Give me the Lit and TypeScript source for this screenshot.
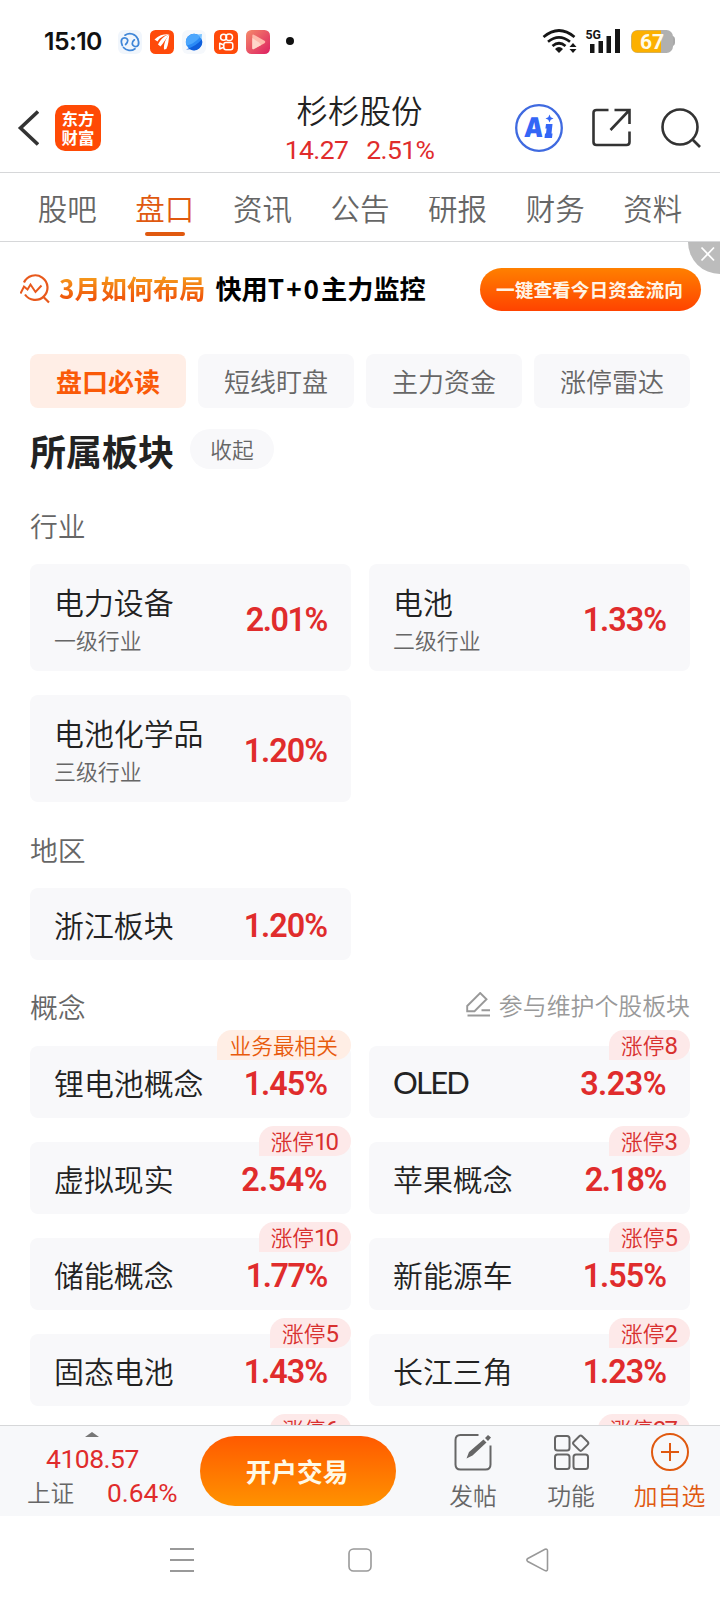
import { LitElement, html, svg, css, nothing } from "lit";
import { customElement, property } from "lit/decorators.js";
import { classMap } from "lit/directives/class-map.js";

interface Sector {
  name: string;
  level?: string;
  change: string;
  tag?: string;
  hot?: boolean;
}

const industries: Sector[] = [
  { name: "电力设备", level: "一级行业", change: "2.01%" },
  { name: "电池", level: "二级行业", change: "1.33%" },
  { name: "电池化学品", level: "三级行业", change: "1.20%" },
];
const regions: Sector[] = [{ name: "浙江板块", change: "1.20%" }];
const concepts: Sector[] = [
  { name: "锂电池概念", change: "1.45%", tag: "业务最相关", hot: true },
  { name: "OLED", change: "3.23%", tag: "涨停8" },
  { name: "虚拟现实", change: "2.54%", tag: "涨停10" },
  { name: "苹果概念", change: "2.18%", tag: "涨停3" },
  { name: "储能概念", change: "1.77%", tag: "涨停10" },
  { name: "新能源车", change: "1.55%", tag: "涨停5" },
  { name: "固态电池", change: "1.43%", tag: "涨停5" },
  { name: "长江三角", change: "1.23%", tag: "涨停2" },
  { name: "", change: "", tag: "涨停6" },
  { name: "", change: "", tag: "涨停37" },
];

@customElement("sector-card")
export class SectorCard extends LitElement {
  @property({ attribute: false }) item!: Sector;

  static styles = css`
    :host {
      display: block;
      position: relative;
      background: #f8f8fa;
      border-radius: 8px;
    }
    .row {
      display: flex;
      align-items: center;
      justify-content: space-between;
      height: 72px;
      padding: 0 24px;
    }
    .row.tall { height: 107px; }
    .name {
      font-size: 29.9px;
      line-height: 40px;
      color: #222;
      white-space: nowrap;
    }
    .name.latin { font-family: Lato, sans-serif; font-weight: 400; font-size: 31px; letter-spacing: -1.8px; }
    .text { display: flex; flex-direction: column; }
    .level { font-size: 21.9px; line-height: 30px; margin-top: 4px; color: #666; }
    .change {
      font-family: Roboto, sans-serif;
      font-weight: 600;
      font-size: 32.3px;
      line-height: 40px;
      color: #e02c2c;
      letter-spacing: -0.5px;
      padding-top: 4px;
    }
    .change.narrow { letter-spacing: -1px; }
    .change.tight { letter-spacing: -1.4px; }
    .tag {
      position: absolute;
      right: 0;
      top: -16px;
      height: 30px;
      line-height: 30px;
      padding: 0 14px 0 12px;
      border-radius: 15px 15px 15px 0;
      background: #fde9e9;
      color: #d8302f;
      font-size: 21.7px;
      display: flex;
    }
    .tag.hot { background: #ffeee5; color: #e85a0c; padding: 0 13px; }
    .num { font-family: Roboto, sans-serif; font-size: 24px; font-weight: 400; letter-spacing: -2px; padding-top: 1px; }
  `;

  render() {
    const { name, level, change, tag, hot } = this.item;
    const label = tag?.replace(/\d+$/, "");
    const count = tag?.slice(label!.length);
    const changeClass = {
      change: true,
      narrow: change.startsWith("1"),
      tight: change.slice(1).includes("1") || change.includes("77"),
    };
    return html`
      <div class=${classMap({ row: true, tall: !!level })}>
        <div class="text">
          <span class=${classMap({ name: true, latin: /^[A-Z]+$/.test(name) })}>${name}</span>
          ${level ? html`<span class="level">${level}</span>` : nothing}
        </div>
        <span class=${classMap(changeClass)}>${change}</span>
      </div>
      ${tag
        ? html`<div class=${classMap({ tag: true, hot: !!hot })}>
            <span>${label}</span>${count ? html`<span class="num">${count}</span>` : nothing}
          </div>`
        : nothing}
    `;
  }
}

const statusIcons = svg`
  <g>
    <rect x="0" y="0" width="24" height="24" rx="6" fill="#f1f6fc"/>
    <g fill="none" stroke="#3f86d8" stroke-width="1.700" stroke-linecap="round">
      <path d="M7 5.200A8.500 8.500 0 0 1 19.800 9M17 18.800A8.500 8.500 0 0 1 5.500 17.500"/>
      <path d="M4.300 15.500C1.800 9.500 4.500 7.500 7.500 8C10.500 8.800 10.500 12 7.600 14.500"/>
      <path d="M19.800 9C22.200 15 19.500 17 16.700 16.500C13.500 15.500 13.500 12 16.400 9.800"/>
    </g>
  </g>
  <g transform="translate(32 0)">
    <rect width="24" height="24" rx="5.500" fill="#ff4a0a"/>
    <path d="M4.500 9.500C9 5 14 4 19 4.300C13 6 9.500 8 7.500 11.500Z" fill="#fff"/>
    <path d="M8 14.500C11 9 14 6 19 4.600C16 9 14 12.500 10.500 16.500Z" fill="#fff"/>
    <path d="M14 19.500C13.500 14 16 8 19.300 4.600C18.600 10 18.500 15 16.300 19Z" fill="#fff"/>
  </g>
  <g transform="translate(64 0)">
    <rect width="24" height="24" rx="6" fill="#f5f8fc"/>
    <circle cx="12" cy="12" r="8.200" fill="#2a8af5"/>
    <path d="M15 4.500L20 4L19.500 9Z" fill="#7cc4ff"/>
    <path d="M3.900 13A8.200 8.200 0 0 1 18 6.500C15 11 10 14.500 4.500 15.500Z" fill="#4ba6fd"/>
    <path d="M19.800 9.500C16 14 11 17 4 19.500L8 19.200A8.200 8.200 0 0 0 19.800 9.500Z" fill="#0f5fdc"/>
  </g>
  <g transform="translate(96 0)">
    <rect width="24" height="24" rx="5.500" fill="#ff4a0a"/>
    <g fill="none" stroke="#fff" stroke-width="1.500" stroke-linejoin="round">
      <circle cx="9.600" cy="7.300" r="3"/><circle cx="15.200" cy="7.300" r="3.300"/>
      <rect x="9.800" y="12.600" width="9" height="7.200" rx="2.200"/>
      <path d="M9.700 15L5.700 13.200V19L9.700 17.300"/>
    </g>
  </g>
  <g transform="translate(128 0)">
    <rect width="24" height="24" rx="5.500" fill="url(#pinkGrad)"/>
    <path d="M6.300 5.600Q6.300 4 7.800 4.700L18.500 10.800Q20 12 18.500 13.200L7.800 19Q6.300 19.700 6.300 18Z" fill="#ffb9ab"/>
    <path d="M6.300 8L13 12.500L15 15L7.800 19Q6.300 19.700 6.300 18Z" fill="#ffd6ca"/>
  </g>
  <circle cx="172" cy="11" r="4" fill="#111"/>
`;

@customElement("app-root")
export class AppRoot extends LitElement {
  static styles = css`
    :host {
      display: flex;
      flex-direction: column;
      width: 720px;
      height: 1604px;
      overflow: hidden;
      background: #fff;
      font-family: "Noto Sans CJK SC", sans-serif;
      font-weight: 350;
      color: #222;
    }
    svg { display: block; flex: none; }
    .digits { font-family: Roboto, sans-serif; font-weight: 400; }
    .status {
      height: 72px;
      box-sizing: border-box;
      padding: 27px 45px 0 44px;
      display: flex;
      align-items: flex-start;
    }
    .time {
      width: 74px;
      font-family: Inter, sans-serif;
      font-size: 24.8px;
      line-height: 28px;
      font-weight: 600;
      letter-spacing: -0.6px;
      color: #111;
    }
    .apps { margin-top: 3px; }
    .sys { margin: 0 0 0 auto; }
    .header {
      height: 100px;
      border-bottom: 1px solid #d6d7d9;
      display: grid;
      grid-template-columns: 1fr auto 1fr;
      align-items: center;
    }
    .left { display: flex; align-items: center; gap: 16px; padding: 11px 0 0 17px; }
    .brand {
      width: 46px;
      height: 46px;
      border-radius: 10px;
      background: #ff4a05;
      color: #fff;
      font-size: 16.4px;
      line-height: 18.500px;
      font-weight: 700;
      display: flex;
      flex-direction: column;
      align-items: center;
      justify-content: center;
    }
    .stock { text-align: center; padding-top: 12px; margin-left: -1px; }
    .stock-name { font-size: 31.5px; line-height: 40px; }
    .quote { display: flex; gap: 18px; justify-content: center; font-size: 26.500px; line-height: 34px; margin-top: 4px; letter-spacing: -0.6px; color: #e02c2c; }
    .actions { display: flex; align-items: center; justify-content: flex-end; padding: 11px 19px 0 0; }
    .ai { margin-right: 29px; }
    .share { margin-right: 30px; }
    .tabs {
      height: 68px;
      border-bottom: 1px solid #d6d7d9;
      display: grid;
      grid-template-columns: repeat(7, 97.600px);
      justify-content: center;
    }
    .tab {
      display: flex;
      flex-direction: column;
      align-items: center;
      font-size: 29.500px;
      line-height: 40px;
      padding-top: 14px;
      color: #666;
    }
    .tab.on { color: #e0590f; }
    .bar { width: 40px; height: 4px; border-radius: 2px; background: #e0590f; margin-top: 5px; }
    .banner {
      position: relative;
      height: 84px;
      box-sizing: border-box;
      padding: 10px 19px 0 20px;
      display: flex;
      align-items: center;
      font-size: 26.200px;
      line-height: 36px;
      font-weight: 700;
      white-space: nowrap;
    }
    .lead {
      margin: -2px 10px 0 8px;
      background: linear-gradient(#f59a1c 20%, #f0550a 80%);
      -webkit-background-clip: text;
      background-clip: text;
      color: transparent;
    }
    .pitch { color: #000; margin-top: -2px; }
    .wide { letter-spacing: 2px; }
    .cta {
      margin-left: auto;
      width: 221px;
      height: 43px;
      line-height: 41px;
      border-radius: 22px;
      background: linear-gradient(#ff8000, #ff4300);
      color: #fff4e6;
      text-align: center;
      font-size: 18.700px;
      text-indent: -2px;
    }
    .close {
      position: absolute;
      right: 0;
      top: 0;
      width: 32px;
      height: 32px;
      border-bottom-left-radius: 32px;
      background: #bcbcbc;
    }
    .content {
      flex: 1;
      min-height: 0;
      overflow: hidden;
      padding: 28px 30px 0;
    }
    .chips { display: grid; grid-template-columns: repeat(4, 1fr); gap: 12px; }
    .chip {
      height: 54px;
      line-height: 54px;
      text-align: center;
      border-radius: 8px;
      background: #f8f8fa;
      color: #666;
      font-size: 26px;
    }
    .chip.on { background: #ffeee6; color: #fa5a08; font-weight: 700; }
    .title-row { display: flex; align-items: center; height: 40px; margin-top: 21px; }
    .title { font-size: 36px; font-weight: 600; line-height: 46px; padding-top: 1px; }
    .fold {
      width: 84px;
      height: 40px;
      line-height: 40px;
      margin-left: 16px;
      border-radius: 20px;
      background: #f8f8fa;
      color: #666;
      text-align: center;
      font-size: 21.700px;
    }
    .group-head {
      display: flex;
      justify-content: space-between;
      align-items: center;
      color: #666;
      font-size: 27.800px;
      line-height: 40px;
      height: 40px;
    }
    .h1 { margin: 36px 0 19px; }
    .h2 { margin: 27px 0 19px; }
    .h3 { margin: 26px 0 20px; }
    .edit { display: flex; gap: 8px; align-items: center; color: #999; font-size: 23.900px; margin-top: -3px; }
    .cards { display: grid; grid-template-columns: 1fr 1fr; gap: 24px 18px; }
    .dock {
      height: 90px;
      border-top: 1px solid #d6d7d9;
      background: #f7f8fa;
      display: flex;
      align-items: flex-start;
    }
    .index { width: 200px; display: flex; flex-direction: column; }
    .up { margin: 6px 0 0 85px; }
    .point { font-size: 26.500px; line-height: 32px; color: #e02c2c; padding: 6px 0 0 46px; letter-spacing: -0.500px; }
    .line { display: flex; align-items: center; padding: 0 0 0 27px; }
    .mkt { font-size: 23.600px; line-height: 32px; color: #666; width: 80px; }
    .pct { font-size: 26.300px; color: #e02c2c; line-height: 32px; padding-top: 2px; }
    .open {
      width: 196px;
      height: 70px;
      line-height: 70px;
      margin-top: 10px;
      border-radius: 35px;
      background: linear-gradient(#ff5a00, #ff9200);
      color: #fff9e6;
      font-size: 25.700px;
      font-weight: 700;
      text-align: center;
      text-indent: -2px;
    }
    .acts { display: grid; grid-template-columns: repeat(3, 98px); margin-left: 28px; }
    .act { display: flex; flex-direction: column; align-items: center; font-size: 23.800px; line-height: 34px; color: #666; padding-top: 7px; gap: 7px; }
    .act.add { color: #e0590f; padding-left: 1px; }
    .nav { height: 88px; display: flex; justify-content: space-between; align-items: center; padding: 0 170px; }
  `;

  render() {
    const tabs = ["股吧", "盘口", "资讯", "公告", "研报", "财务", "资料"];
    const chips = ["盘口必读", "短线盯盘", "主力资金", "涨停雷达"];
    return html`
      <div class="status">
        <span class="time">15:10</span>
        <svg class="apps" width="178" height="24" viewBox="0 0 178 24">
          <defs>
            <linearGradient id="pinkGrad" x1="0" y1="0" x2="1" y2="1">
              <stop offset="0" stop-color="#f58a6a"/><stop offset="1" stop-color="#dd1f62"/>
            </linearGradient>
          </defs>
          ${statusIcons}
        </svg>
        <svg class="sys" width="133" height="28" viewBox="542 27 133 28">
          <g fill="none" stroke="#161616" stroke-width="2.700">
            <path d="M543.500 37Q559 24 574.500 37"/>
            <path d="M548 41.800Q559 33 570 41.800"/>
            <path d="M552.500 46Q559 40.500 565.500 46"/>
          </g>
          <path d="M555 49Q559 45 563 49L559 53Z" fill="#161616"/>
          <path d="M569.500 47l3.500-4l3.500 4zM569.500 49l3.500 4l3.500-4z" fill="#161616"/>
          <text x="585.500" y="38.800" font-family="Roboto" font-weight="700" font-size="13.500" fill="#161616" textLength="15.500" lengthAdjust="spacingAndGlyphs">5G</text>
          <g fill="#161616">
            <rect x="590" y="44" width="4.500" height="9"/><rect x="598.500" y="41" width="4.500" height="12"/>
            <rect x="606.500" y="36" width="4.500" height="17"/><rect x="615" y="29" width="5" height="24"/>
          </g>
          <path d="M672 36h1q2 1 2 3v4q0 2-2 3h-1z" fill="#a8a8a8"/>
          <rect x="631" y="30" width="42" height="23" rx="6.500" fill="#b0b0b0"/>
          <path d="M637.500 30.500H661V52.500H637.500Q631.500 52.500 631.500 46.500V36.500Q631.500 30.500 637.500 30.500Z" fill="#fcb000"/>
          <text x="652" y="49" text-anchor="middle" font-family="Roboto" font-weight="700" font-size="21" fill="#fffbe8">67</text>
        </svg>
      </div>

      <div class="header">
        <div class="left">
          <svg width="22" height="38" viewBox="0 0 22 38"><path d="M21 2.500L3.500 19L21 35.500" fill="none" stroke="#333" stroke-width="3.600"/></svg>
          <div class="brand"><span>东方</span><span>财富</span></div>
        </div>
        <div class="stock">
          <div class="stock-name">杉杉股份</div>
          <div class="quote digits"><span>14.27</span><span>2.51%</span></div>
        </div>
        <div class="actions">
          <svg class="ai" width="48" height="48" viewBox="0 0 48 48">
            <circle cx="24" cy="24" r="22.800" fill="none" stroke="#3f6ae0" stroke-width="2.300"/>
            <text x="9" y="33" font-family="Inter" font-weight="900" font-size="27" textLength="19" lengthAdjust="spacingAndGlyphs" transform="skewX(-4) translate(2 0)" fill="#3466f6">A</text>
            <path d="M31 20h6.500l-1 9.500h1l-.5 4.500h-7.500l.5-4.500h1l.6-5h-1.200zM34.500 10.500l1.200 2.800l2.800 1.200l-2.800 1.200l-1.200 2.800l-1.200-2.800l-2.800-1.200l2.800-1.200z" fill="#3466f6"/>
          </svg>
          <svg class="share" width="39" height="39" viewBox="0 0 39 39" fill="none" stroke="#333" stroke-width="2.600">
            <path d="M16.500 2H4.500Q1.500 2 1.500 5V34Q1.500 37 4.500 37H34.500Q37.500 37 37.500 34V23.500M22.500 2H37.500V16M37 2.500L18.500 22"/>
          </svg>
          <svg width="40" height="40" viewBox="0 0 40 40" fill="none" stroke="#333" stroke-width="2.600">
            <circle cx="19" cy="19" r="17.500"/><path d="M31 31L39 39"/>
          </svg>
        </div>
      </div>

      <div class="tabs">
        ${tabs.map((t, i) => html`<div class=${classMap({ tab: true, on: i === 1 })}>
          <span>${t}</span>${i === 1 ? html`<div class="bar"></div>` : nothing}
        </div>`)}
      </div>

      <div class="banner">
        <svg width="31" height="30" viewBox="0 0 31 30" fill="none" stroke="#e8591c" stroke-width="2.200">
          <path d="M4 8.500A12.300 12.300 0 1 1 5 20.500M23 22.500L29 28.500"/>
          <path d="M.5 19.500L4 12.500L7.500 15.500L10.500 10.500L15.500 18L21.500 11.500" stroke-width="2"/>
        </svg>
        <span class="lead">3月如何布局</span>
        <span class="pitch">快用<span class="wide">T+0</span>主力监控</span>
        <span class="cta">一键查看今日资金流向</span>
        <div class="close">
          <svg width="32" height="32" viewBox="0 0 32 32"><path d="M13.500 5.500L26 18.500M26 5.500L13.500 18.500" stroke="#fff" stroke-width="1.800"/></svg>
        </div>
      </div>

      <div class="content">
        <div class="chips">
          ${chips.map((c, i) => html`<div class=${classMap({ chip: true, on: i === 0 })}>${c}</div>`)}
        </div>
        <div class="title-row"><span class="title">所属板块</span><span class="fold">收起</span></div>
        <div class="group-head h1">行业</div>
        <div class="cards">${industries.map((s) => html`<sector-card .item=${s}></sector-card>`)}</div>
        <div class="group-head h2">地区</div>
        <div class="cards">${regions.map((s) => html`<sector-card .item=${s}></sector-card>`)}</div>
        <div class="group-head h3">
          <span>概念</span>
          <span class="edit">
            <svg width="25" height="25" viewBox="0 0 25 25" fill="none" stroke="#999" stroke-width="1.900">
              <path d="M1.200 19.200V14L14.200 1L20.500 7.200L8.500 19.200ZM1.500 23.500H24M15.500 18.200H24"/>
            </svg>参与维护个股板块
          </span>
        </div>
        <div class="cards">${concepts.map((s) => html`<sector-card .item=${s}></sector-card>`)}</div>
      </div>

      <div class="dock">
        <div class="index">
          <svg class="up" width="14" height="5" viewBox="0 0 14 5"><path d="M0 5L7 0L14 5Z" fill="#777"/></svg>
          <span class="point digits">4108.57</span>
          <div class="line"><span class="mkt">上证</span><span class="pct digits">0.64%</span></div>
        </div>
        <div class="open">开户交易</div>
        <div class="acts">
          <div class="act">
            <svg width="38" height="38" viewBox="0 0 38 38" fill="none" stroke="#666" stroke-width="2">
              <path d="M24.500 2H6.500Q1.500 2 1.500 7V31.500Q1.500 36.500 6.500 36.500H31.500Q36.500 36.500 36.500 31.500V12.500"/>
              <path d="M12.500 25.500L15 19L29.500 6.500L32.500 9.500L18.500 22.500ZM31 5L34 2L37 4.500L34 8Z" fill="#666" stroke="none"/>
            </svg>发帖
          </div>
          <div class="act">
            <svg width="38" height="38" viewBox="0 0 38 38" fill="none" stroke="#666" stroke-width="2">
              <rect x="3" y="3" width="14.500" height="14.500" rx="2.500"/><rect x="3" y="21.500" width="14.500" height="14.500" rx="2.500"/>
              <rect x="21.500" y="21.500" width="14.500" height="14.500" rx="2.500"/>
              <rect x="22.800" y="4.300" width="11.800" height="11.800" rx="2" transform="rotate(45 28.700 10.200)"/>
            </svg>功能
          </div>
          <div class="act add">
            <svg width="38" height="38" viewBox="0 0 38 38" fill="none" stroke="#e0590f" stroke-width="2">
              <circle cx="19" cy="19" r="18"/><path d="M10 19H28M19 10V28"/>
            </svg>加自选
          </div>
        </div>
      </div>

      <div class="nav">
        <svg width="24" height="24" viewBox="0 0 24 24" stroke="#999" stroke-width="1.800"><path d="M0 1H24M0 12H24M0 23H24"/></svg>
        <svg width="24" height="24" viewBox="0 0 24 24" fill="none" stroke="#999" stroke-width="1.600"><rect x="1" y="1" width="22" height="22" rx="4.500"/></svg>
        <svg width="24" height="24" viewBox="2 0 24 24" fill="none" stroke="#999" stroke-width="1.600"><path d="M3.800 10.500L21 1.300Q23.500 .5 23.500 3V21Q23.500 23.500 21 22.600L3.800 13.500Q1.900 12 3.800 10.500Z"/></svg>
      </div>
    `;
  }
}
